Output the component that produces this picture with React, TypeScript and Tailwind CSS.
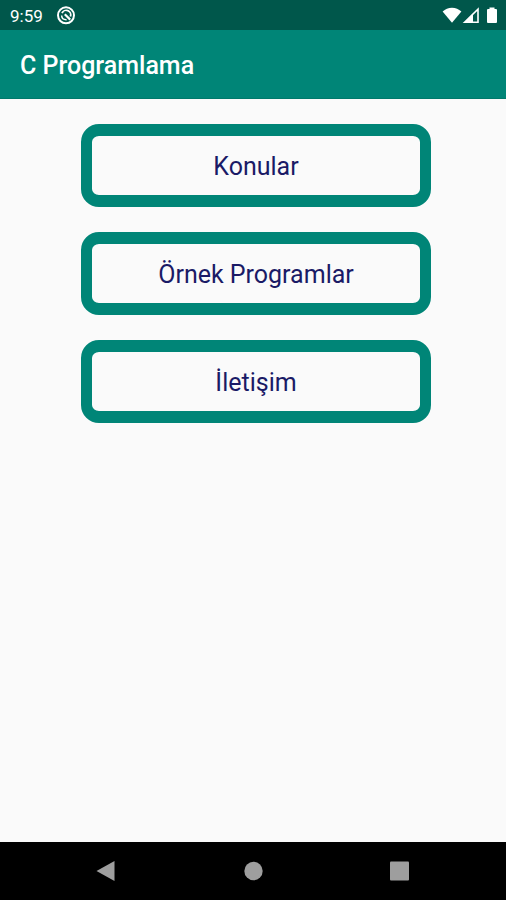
import React from "react";

const menuItems = ["Konular", "Örnek Programlar", "İletişim"];

function StatusBar() {
  return (
    <div className="flex h-[30px] items-center justify-between bg-[#00574b] pl-[10px] pr-2 text-white">
      <div className="flex items-center gap-3">
        <span className="pt-0.5 text-[17px] leading-5">9:59</span>
        <svg className="ml-px size-5" viewBox="0 0 20 20" fill="none" stroke="currentColor">
          <circle cx="10" cy="10.300" r="8" strokeWidth="2" />
          <path d="M6 8.200A4.500 4.500 0 0 1 14.400 11.500" strokeWidth="1.800" />
          <path d="M8.800 9.200l5.400 5.400" strokeWidth="2.200" />
          <path d="M5.600 10.500c0.200 2.600 2.200 4.300 5 4.200" strokeWidth="1.500" />
        </svg>
      </div>
      <div className="flex items-center">
        <svg className="h-5 w-5" viewBox="0 0 20 20" fill="currentColor">
          <path d="M0.600 6.600C3.200 4.200 6.400 2.800 10 2.800s6.800 1.400 9.400 3.800L10 17.800z" />
        </svg>
        <svg className="h-5 w-[18px]" viewBox="0 0 18 20" fill="none" stroke="currentColor">
          <path d="M2.600 17.200L16 4.100v13.100z" strokeWidth="1.600" />
          <path d="M2 17.500L11 8.500v9z" fill="currentColor" stroke="none" />
        </svg>
        <svg className="ml-[6px] h-5 w-3" viewBox="0 0 12 20" fill="currentColor">
          <path d="M3.500 2.500h5V4h1.500q1 0 1 1v12q0 1-1 1H2q-1 0-1-1V5q0-1 1-1h1.500z" />
        </svg>
      </div>
    </div>
  );
}

function NavigationBar() {
  return (
    <nav className="flex h-[58px] items-center justify-center gap-[127px] bg-black text-[#9e9e9e]">
      <button type="button" aria-label="Geri" className="size-5">
        <svg className="size-5" viewBox="0 0 20 20" fill="currentColor">
          <path d="M0.500 10L18.500 0v20z" />
        </svg>
      </button>
      <button type="button" aria-label="Ana ekran" className="size-5">
        <svg className="size-5" viewBox="0 0 20 20" fill="currentColor">
          <circle cx="10.500" cy="10" r="9.200" />
        </svg>
      </button>
      <button type="button" aria-label="Son uygulamalar" className="size-5">
        <svg className="size-5" viewBox="0 0 20 20" fill="currentColor">
          <rect x="0" y="0.500" width="19" height="19" rx="1" />
        </svg>
      </button>
    </nav>
  );
}

export default function App() {
  return (
    <div className="flex min-h-screen flex-col bg-[#fafafa] font-[Roboto,sans-serif]">
      <StatusBar />
      <header className="flex h-[69px] items-center border-b border-[#00796b] bg-[#008577] px-5 pt-1">
        <h1 className="text-[25px] leading-8 font-medium text-white">C Programlama</h1>
      </header>
      <main className="flex flex-1 flex-col gap-[25px] pt-[25px] pr-[75px] pl-[81px]">
        {menuItems.map((item) => (
          <button
            key={item}
            type="button"
            className="h-[83px] w-full rounded-[18px] border-x-[11px] border-y-[12px] border-[#008577] pt-0.5 text-[25px] leading-8 text-[#1a1a66]"
          >
            {item}
          </button>
        ))}
      </main>
      <NavigationBar />
    </div>
  );
}
